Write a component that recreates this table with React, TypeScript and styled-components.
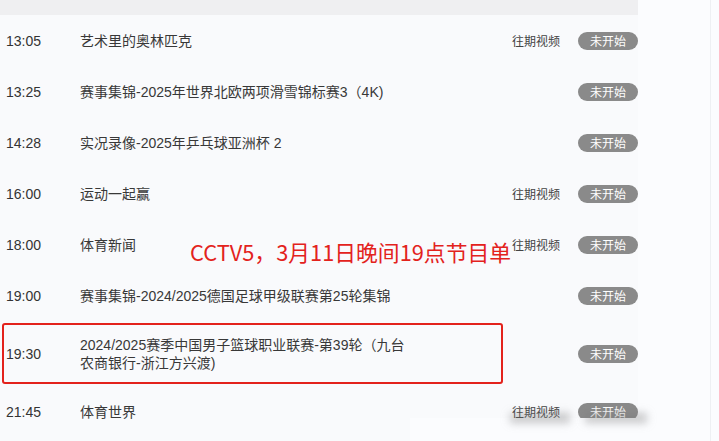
import styled, { createGlobalStyle } from 'styled-components';

interface Program {
  time: string;
  title: string;
  replay?: boolean;
  highlight?: boolean;
}

const programs: Program[] = [
  { time: '13:05', title: '艺术里的奥林匹克', replay: true },
  { time: '13:25', title: '赛事集锦-2025年世界北欧两项滑雪锦标赛3（4K)' },
  { time: '14:28', title: '实况录像-2025年乒乓球亚洲杯 2' },
  { time: '16:00', title: '运动一起赢', replay: true },
  { time: '18:00', title: '体育新闻', replay: true },
  { time: '19:00', title: '赛事集锦-2024/2025德国足球甲级联赛第25轮集锦' },
  {
    time: '19:30',
    title: '2024/2025赛季中国男子篮球职业联赛-第39轮（九台农商银行-浙江方兴渡)',
    highlight: true,
  },
  { time: '21:45', title: '体育世界', replay: true },
];

const GlobalStyle = createGlobalStyle`
  html, body {
    margin: 0;
    padding: 0;
    background: #fbfcfe;
  }
  body {
    font-family: 'Liberation Sans', 'Noto Sans CJK SC', sans-serif;
    color: #333;
  }
`;

function App() {
  return (
    <>
      <GlobalStyle />
      <Page>
        <Panel>
          <Header />
          <List>
            {programs.map((p) => (
              <Row key={p.time} $tall={p.title.length > 30}>
                <Time>{p.time}</Time>
                <Title>{p.title}</Title>
                <Replay>{p.replay ? '往期视频' : ''}</Replay>
                <Badge>未开始</Badge>
                {p.highlight && <HighlightBox />}
              </Row>
            ))}
          </List>
          <Caption>CCTV5，3月11日晚间19点节目单</Caption>
          <BlurMask>
            <Smear $left={100} $width={60} />
            <Smear $left={175} $width={62} />
          </BlurMask>
        </Panel>
        <Gutter />
      </Page>
    </>
  );
}

const Page = styled.div`
  display: flex;
  width: 719px;
  height: 441px;
  overflow: hidden;
  background: #fbfcfe;
`;

const Panel = styled.div`
  position: relative;
  width: 638px;
  display: flex;
  flex-direction: column;
  background: #f9fafc;
`;

const Header = styled.div`
  height: 15px;
  background: #efeff1;
`;

const List = styled.div`
  display: flex;
  flex-direction: column;
`;

const Row = styled.div<{ $tall?: boolean }>`
  position: relative;
  display: grid;
  grid-template-columns: 74px 1fr auto 60px;
  align-items: center;
  column-gap: 18px;
  height: ${({ $tall }) => ($tall ? '65px' : '51px')};
  padding-left: 6px;
`;

const Time = styled.span`
  font-size: 14px;
  color: #333;
`;

const Title = styled.span`
  max-width: 336px;
  margin-left: -18px;
  font-size: 14px;
  line-height: 18px;
  color: #383838;
`;

const Replay = styled.span`
  font-size: 12px;
  color: #444;
  font-family: 'Noto Sans CJK SC', sans-serif;
`;

const Badge = styled.span`
  display: flex;
  align-items: center;
  justify-content: center;
  height: 18px;
  border-radius: 9px;
  background: #8a8a8a;
  color: #fff;
  font-size: 12px;
  font-family: 'Noto Sans CJK SC', sans-serif;
`;

const HighlightBox = styled.div`
  position: absolute;
  left: 2px;
  top: 2px;
  bottom: 2px;
  width: 497px;
  border: 2px solid #e3221c;
  border-radius: 3px;
  pointer-events: none;
`;

const Caption = styled.div`
  position: absolute;
  left: 190px;
  top: 237px;
  font-family: 'Noto Sans CJK SC', sans-serif;
  font-size: 21.8px;
  line-height: 30px;
  color: #e3221c;
  white-space: nowrap;
`;

const BlurMask = styled.div`
  position: absolute;
  left: 410px;
  top: 418px;
  width: 250px;
  height: 30px;
  background: #fbfcfe;
`;

const Smear = styled.div<{ $left: number; $width: number }>`
  position: absolute;
  top: -5px;
  left: ${({ $left }) => $left}px;
  width: ${({ $width }) => $width}px;
  height: 10px;
  background: rgba(120, 120, 120, 0.4);
  filter: blur(4px);
`;

const Gutter = styled.div`
  flex: 1;
  border-right: 1px solid #eef0f3;
  margin-right: 8px;
`;

export default App;
